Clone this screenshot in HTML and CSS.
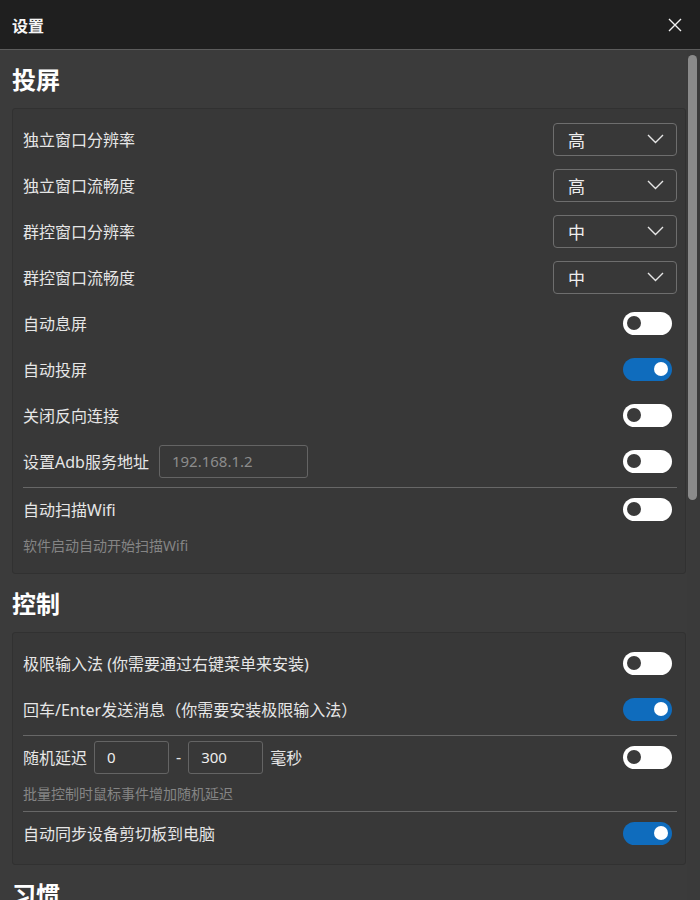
FILE: index.html
```html
<!DOCTYPE html>
<html lang="zh-CN">
<head>
  <meta charset="UTF-8">
  <meta name="viewport" content="width=device-width, initial-scale=1.0">
  <title>设置</title>
  <link rel="stylesheet" href="styles.css">
</head>
<body>
  <div class="titlebar">
    <span class="title">设置</span>
    <svg class="close" width="14" height="14" viewBox="0 0 14 14">
      <path d="M1 1 L13 13 M13 1 L1 13" stroke="#f2f2f2" stroke-width="1.4" fill="none"/>
    </svg>
  </div>

  <div class="body">
    <div class="pane">
      <!-- 投屏 -->
      <h2 class="group-title">投屏</h2>
      <div class="card">
        <div class="row">
          <span class="label">独立窗口分辨率</span>
          <div class="select"><span>高</span><svg width="17" height="10" viewBox="0 0 17 10"><polyline points="1,1 8.5,8.5 16,1" stroke="#e6e6e6" stroke-width="1.4" fill="none"/></svg></div>
        </div>
        <div class="row">
          <span class="label">独立窗口流畅度</span>
          <div class="select"><span>高</span><svg width="17" height="10" viewBox="0 0 17 10"><polyline points="1,1 8.5,8.5 16,1" stroke="#e6e6e6" stroke-width="1.4" fill="none"/></svg></div>
        </div>
        <div class="row">
          <span class="label">群控窗口分辨率</span>
          <div class="select"><span>中</span><svg width="17" height="10" viewBox="0 0 17 10"><polyline points="1,1 8.5,8.5 16,1" stroke="#e6e6e6" stroke-width="1.4" fill="none"/></svg></div>
        </div>
        <div class="row">
          <span class="label">群控窗口流畅度</span>
          <div class="select"><span>中</span><svg width="17" height="10" viewBox="0 0 17 10"><polyline points="1,1 8.5,8.5 16,1" stroke="#e6e6e6" stroke-width="1.4" fill="none"/></svg></div>
        </div>
        <div class="row">
          <span class="label">自动息屏</span>
          <span class="toggle"></span>
        </div>
        <div class="row">
          <span class="label">自动投屏</span>
          <span class="toggle on"></span>
        </div>
        <div class="row">
          <span class="label">关闭反向连接</span>
          <span class="toggle"></span>
        </div>
        <div class="row">
          <div class="inline">
            <span class="label">设置Adb服务地址</span>
            <input class="text-input wide" type="text" placeholder="192.168.1.2">
          </div>
          <span class="toggle"></span>
        </div>
        <div class="divider"></div>
        <div class="row short">
          <span class="label">自动扫描Wifi</span>
          <span class="toggle"></span>
        </div>
        <div class="hint">软件启动自动开始扫描Wifi</div>
      </div>

      <!-- 控制 -->
      <h2 class="group-title">控制</h2>
      <div class="card tight">
        <div class="row">
          <span class="label">极限输入法 (你需要通过右键菜单来安装)</span>
          <span class="toggle"></span>
        </div>
        <div class="row">
          <span class="label">回车/Enter发送消息（你需要安装极限输入法）</span>
          <span class="toggle on"></span>
        </div>
        <div class="divider"></div>
        <div class="row short">
          <div class="inline">
            <span class="label">随机延迟</span>
            <input class="text-input small" type="text" value="0">
            <span class="label">-</span>
            <input class="text-input small" type="text" value="300">
            <span class="label">毫秒</span>
          </div>
          <span class="toggle"></span>
        </div>
        <div class="hint">批量控制时鼠标事件增加随机延迟</div>
        <div class="divider"></div>
        <div class="row short">
          <span class="label">自动同步设备剪切板到电脑</span>
          <span class="toggle on"></span>
        </div>
      </div>

      <!-- 习惯 -->
      <h2 class="group-title">习惯</h2>
      <div class="card">
        <div class="row">
          <span class="label">开机自启</span>
          <span class="toggle"></span>
        </div>
      </div>
    </div>
    <div class="scrollbar">
      <div class="thumb"></div>
    </div>
  </div>
</body>
</html>
```

FILE: styles.css
```css
body {
  margin: 0;
  padding: 0;
  width: 700px;
  height: 900px;
  overflow: hidden;
  background-color: #3b3b3b;
  font-family: "Noto Sans", "Noto Sans CJK SC", sans-serif;
  color: #e6e6e6;
}
.titlebar {
  height: 49px;
  background-color: #1f1f1f;
  border-bottom: 1px solid #5c5c5c;
  display: flex;
  align-items: center;
  justify-content: space-between;
  padding: 0 18px 0 12px;
}
.title {
  font-size: 16px;
  font-weight: bold;
  color: #f5f5f5;
}
.close {
  display: block;
}
.body {
  display: flex;
  height: 850px;
}
.pane {
  flex: 1;
  overflow: hidden;
  padding: 0 1px 0 12px;
}
.scrollbar {
  width: 13px;
  background-color: #3a3a3a;
}
.thumb {
  width: 9px;
  height: 445px;
  margin: 5px 0 0 1px;
  border-radius: 5px;
  background-color: #8a8a8a;
}
.group-title {
  margin: 0;
  height: 58px;
  display: flex;
  align-items: center;
  padding-bottom: 1px;
  box-sizing: border-box;
  font-size: 24px;
  font-weight: bold;
  color: #ffffff;
}
.card {
  background-color: #383838;
  border: 1px solid #313131;
  border-radius: 3px;
  padding: 7px 8px 17px 10px;
}
.card.tight {
  padding-bottom: 10px;
}
.row {
  height: 46px;
  display: flex;
  align-items: center;
  justify-content: space-between;
}
.row.short {
  height: 42px;
}
.inline {
  display: flex;
  align-items: center;
}
.label {
  font-size: 16px;
  color: #e6e6e6;
  white-space: nowrap;
}
.select {
  width: 124px;
  height: 33px;
  box-sizing: border-box;
  border: 1px solid #6e6e6e;
  border-radius: 4px;
  display: flex;
  align-items: center;
  justify-content: space-between;
  padding: 0 12px 0 14px;
  font-size: 17px;
  color: #eeeeee;
}
.select svg {
  display: block;
}
.text-input {
  height: 33px;
  box-sizing: border-box;
  background: transparent;
  border: 1px solid #646464;
  border-radius: 3px;
  font-family: "Noto Sans", "Noto Sans CJK SC", sans-serif;
  font-size: 15px;
  color: #eeeeee;
  padding: 0 12px;
  outline: none;
}
.text-input::placeholder {
  color: #8c8c8c;
}
.text-input.wide {
  width: 149px;
  margin-left: 10px;
}
.text-input.small {
  width: 75px;
  margin: 0 7px;
}
.toggle {
  width: 49px;
  height: 23px;
  box-sizing: border-box;
  border-radius: 12px;
  background-color: #ffffff;
  margin-right: 5px;
  display: flex;
  align-items: center;
  padding: 0 4px;
}
.toggle::after {
  content: "";
  width: 14px;
  height: 14px;
  border-radius: 50%;
  background-color: #3a3a3a;
}
.toggle.on {
  background-color: #0f6cbd;
  justify-content: flex-end;
}
.toggle.on::after {
  background-color: #ffffff;
}
.divider {
  height: 1px;
  background-color: #676767;
  margin: 3px 0 0 0;
}
.hint {
  font-size: 14px;
  line-height: 20px;
  color: #858585;
  margin: 6px 0 0;
}
.hint + .divider {
  margin-top: 7px;
}
```
